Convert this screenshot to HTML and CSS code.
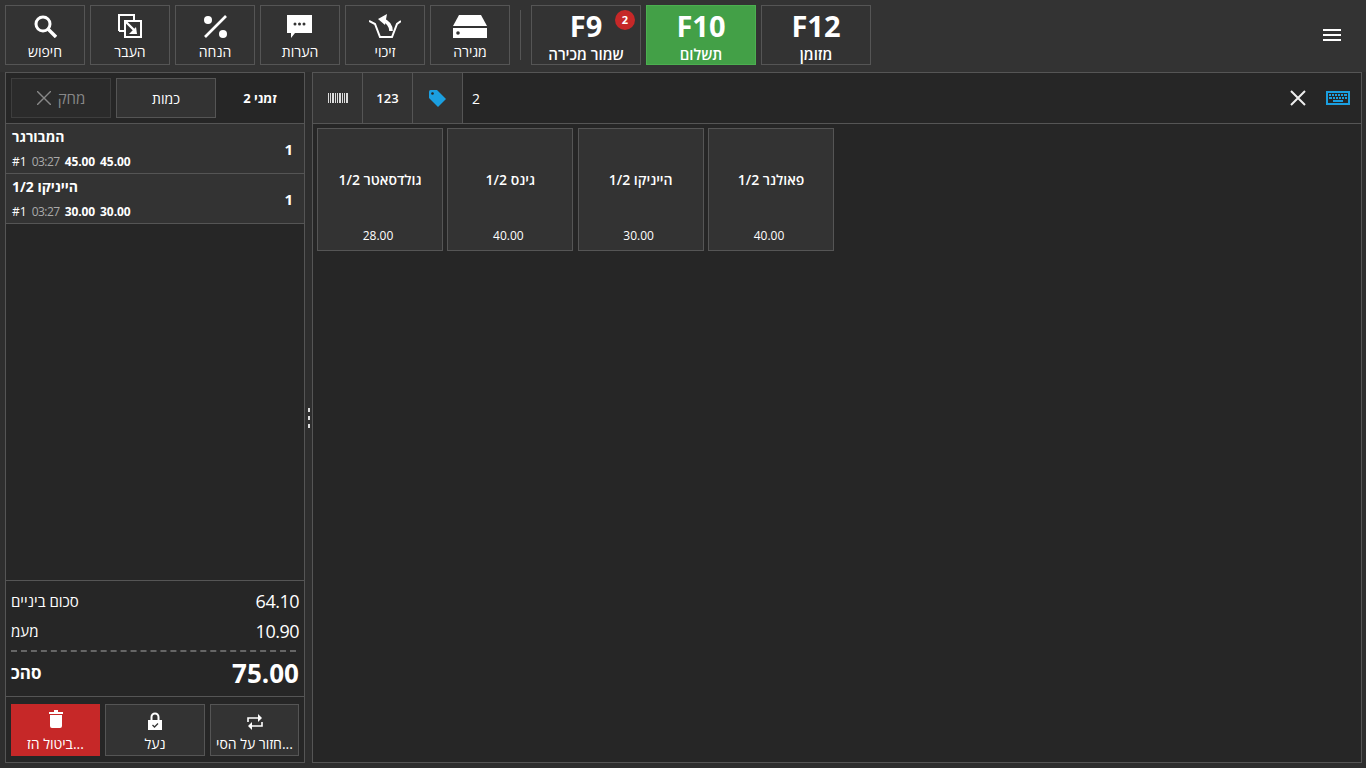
FILE: index.html
```html
<!DOCTYPE html>
<html lang="he">
<head>
<meta charset="utf-8">
<title>POS</title>
<link rel="stylesheet" href="styles.css">
</head>
<body>
<header class="topbar">
  <button class="tool"><svg class="ico" viewBox="0 0 24 24"><circle cx="10" cy="10" r="7" class="ln" stroke-width="3"/><path d="M15 15l8 8" class="ln" stroke-width="3.4"/></svg><span>חיפוש</span></button>
  <button class="tool"><svg class="ico" viewBox="0 0 24 24"><path d="M1 17V1h15v6" class="ln" stroke-width="2"/><path d="M1 17h6" class="ln" stroke-width="2"/><rect x="7" y="7" width="16" height="16" class="ln" stroke-width="2"/><path d="M7 7l10 10" class="ln" stroke-width="2.4"/><path d="M19 20h-8l7-7z" class="fl"/></svg><span>העבר</span></button>
  <button class="tool"><svg class="ico" viewBox="0 0 24 24"><circle cx="5" cy="6" r="4" class="fl"/><circle cx="20" cy="20" r="4" class="fl"/><path d="M23 2L2 23" class="ln" stroke-width="2.6"/></svg><span>הנחה</span></button>
  <button class="tool"><svg class="ico wide" viewBox="0 0 26 24"><path d="M0 1h25v18H8l-4 5v-5H0z" class="fl"/><circle cx="8" cy="10" r="1.5" class="dk"/><circle cx="12.500" cy="10" r="1.5" class="dk"/><circle cx="17" cy="10" r="1.500" class="dk"/></svg><span>הערות</span></button>
  <button class="tool"><svg class="ico xwide" viewBox="0 0 32 24"><path d="M0 7l6 3 5 13h12l5-13 4-3" class="ln" stroke-width="2"/><path d="M22 17c0-5-3-9-8-11" class="ln" stroke-width="3.6"/><path d="M18 0L9 5l7 6z" class="fl"/></svg><span>זיכוי</span></button>
  <button class="tool"><svg class="ico xxwide" viewBox="0 0 34 24"><path d="M6 1h22l6 11H0z" class="fl"/><path d="M0 14h34v10H0z" class="fl"/><circle cx="5" cy="19" r="1.800" class="dk"/></svg><span>מגירה</span></button>
  <div class="sep"></div>
  <button class="fkey"><b>F9</b><span>שמור מכירה</span><i class="badge">2</i></button>
  <button class="fkey pay"><b>F10</b><span>תשלום</span></button>
  <button class="fkey"><b>F12</b><span>מזומן</span></button>
  <svg class="menu" viewBox="0 0 18 12"><path d="M0 0h18v2H0zM0 5h18v2H0zM0 10h18v2H0z" class="fl"/></svg>
</header>
<main class="main">
  <section class="left">
    <div class="lhead">
      <button class="del"><svg class="delx" viewBox="0 0 14 14"><path d="M0 0l14 14M14 0L0 14" class="gl"/></svg><span>מחק</span></button>
      <button class="qty">כמות</button>
      <div class="oname">זמני 2</div>
    </div>
    <div class="rows">
      <div class="row">
        <div class="rinfo">
          <div class="rname">המבורגר</div>
          <div class="rmeta"><span>#1</span><span class="time">03:27</span><b>45.00</b><b>45.00</b></div>
        </div>
        <div class="rqty">1</div>
      </div>
      <div class="row">
        <div class="rinfo">
          <div class="rname">הייניקו 1/2</div>
          <div class="rmeta"><span>#1</span><span class="time">03:27</span><b>30.00</b><b>30.00</b></div>
        </div>
        <div class="rqty">1</div>
      </div>
    </div>
    <div class="totals">
      <div class="tline"><span>סכום ביניים</span><span class="tval">64.10</span></div>
      <div class="tline"><span>מעמ</span><span class="tval">10.90</span></div>
      <div class="dash"></div>
      <div class="tsum"><b>סהכ</b><b class="tbig">75.00</b></div>
    </div>
    <div class="actions">
      <button class="act red"><svg class="aico" viewBox="-1 0 16 22"><path d="M0 2h5V0h4v2h5v2H0zM1 5h12v11q0 2-2 2H3q-2 0-2-2z" class="fl"/></svg><span>ביטול הז...</span></button>
      <button class="act"><svg class="aico" viewBox="-1 -2 16 22"><path d="M3.500 8V5a3.500 3.500 0 0 1 7 0v3" class="ln" stroke-width="2"/><rect y="8" width="14" height="10" class="fl"/><path d="M4.500 13l2 2 3.500-3.500" class="dkl"/></svg><span>נעל</span></button>
      <button class="act"><svg class="aico" viewBox="0 -3 16 22"><path d="M1 9V5h12M15 9v4H3" class="ln" stroke-width="1.600"/><path d="M11 1l4 4-4 4zM5 9l-4 4 4 4z" class="fl"/></svg><span>חזור על הסי...</span></button>
    </div>
  </section>
  <div class="split"><i></i><i></i><i></i></div>
  <section class="right">
    <div class="rhead">
      <div class="tab"><svg class="bar" viewBox="0 0 20 10"><path d="M0 0h1v10H0zM2 0h1v10H2zM4 0h2v10H4zM7 0h1v10H7zM9 0h1v10H9zM11 0h2v10h-2zM14 0h1v10h-1zM16 0h1v10h-1zM18 0h2v10h-2z" class="bars"/></svg></div>
      <div class="tab num">123</div>
      <div class="tab"><svg class="tag" viewBox="0 0 17 17"><path d="M0 1.500Q0 0 1.500 0H8l9 9-8 8-9-9z" class="bl"/><circle cx="3.500" cy="3.500" r="1.300" class="tagh"/></svg></div>
      <div class="search">2</div>
      <svg class="clear" viewBox="0 0 16 16"><path d="M1 1l14 14M15 1L1 15" class="xl"/></svg>
      <svg class="kbd" viewBox="0 0 24 14"><path d="M0 0h24v14H0zM2 2v10h20V2z" class="bl"/><path d="M3 3h2v2H3zM6 3h2v2H6zM9 3h2v2H9zM12 3h2v2h-2zM15 3h2v2h-2zM18 3h3v2h-3zM3 6h3v2H3zM7 6h2v2H7zM10 6h2v2h-2zM13 6h2v2h-2zM16 6h2v2h-2zM19 6h2v2h-2zM7 9h10v2H7z" class="bl"/></svg>
    </div>
    <div class="grid">
      <button class="card"><span class="cname">גולדסאטר 1/2</span><span class="cprice">28.00</span></button>
      <button class="card"><span class="cname">גינס 1/2</span><span class="cprice">40.00</span></button>
      <button class="card"><span class="cname">הייניקו 1/2</span><span class="cprice">30.00</span></button>
      <button class="card"><span class="cname">פאולנר 1/2</span><span class="cprice">40.00</span></button>
    </div>
  </section>
</main>
</body>
</html>
```
FILE: styles.css
```css
* { box-sizing: border-box; }
html, body { margin: 0; height: 100%; }
body {
  width: 1366px;
  height: 768px;
  overflow: hidden;
  display: flex;
  flex-direction: column;
  background: #2e2e2e;
  color: #fff;
  font-family: "Open Sans", "Liberation Sans", sans-serif;
  font-size: 14px;
}
button {
  font: inherit;
  color: inherit;
  background: #333;
  border: 1px solid #555;
  padding: 0;
  margin: 0;
}
.ln { fill: none; stroke: #fff; }
.fl { fill: #fff; }
.bars { fill: #ddd; }
.dk { fill: #333; }
.dkl { fill: none; stroke: #333; stroke-width: 1.3; }
.gl { fill: none; stroke: #888; stroke-width: 1.4; }
.xl { fill: none; stroke: #eee; stroke-width: 2; }
.bl { fill: #1b9fe0; }
.tagh { fill: #262626; }

.topbar {
  height: 72px;
  flex: none;
  display: flex;
  align-items: flex-start;
  gap: 5px;
  padding: 5px 25px 0 5px;
  background: #333;
}
.tool {
  width: 80px;
  height: 60px;
  display: flex;
  flex-direction: column;
  align-items: center;
  padding-top: 8px;
  font-size: 14px;
  line-height: 19px;
}
.ico { width: 24px; height: 24px; flex: none; margin-bottom: 4px; }
.ico.wide { width: 26px; }
.ico.xwide { width: 32px; }
.ico.xxwide { width: 34px; }
.sep { width: 1px; height: 50px; margin: 5px 5px 0 5px; background: #555; }
.fkey {
  position: relative;
  width: 110px;
  height: 60px;
  display: flex;
  flex-direction: column;
  align-items: center;
  font-size: 15px;
  font-weight: 600;
  line-height: 16px;
}
.fkey b { font-size: 29px; font-weight: 700; line-height: 38px; margin-top: 1px; }
.fkey span { margin-top: 1px; }
.fkey.pay { background: #43a047; border-color: #4caf50; }
.badge {
  position: absolute;
  top: 4px;
  right: 5px;
  width: 20px;
  height: 20px;
  border-radius: 50%;
  background: #c62828;
  font-style: normal;
  font-size: 11px;
  font-weight: 700;
  line-height: 20px;
  text-align: center;
}
.menu { width: 18px; height: 12px; margin: 24px 0 0 auto; }

.main {
  flex: none;
  height: 691px;
  display: flex;
  padding-left: 5px;
}
.left {
  width: 300px;
  flex: none;
  display: flex;
  flex-direction: column;
  background: #262626;
  border: 1px solid #555;
}
.lhead {
  height: 51px;
  flex: none;
  display: flex;
  gap: 5px;
  padding: 5px 5px 0;
  border-bottom: 1px solid #555;
}
.del, .qty { width: 100px; height: 40px; flex: none; }
.del {
  display: flex;
  align-items: center;
  justify-content: center;
  gap: 7px;
  background: #2b2b2b;
  border-color: #3e3e3e;
  color: #888;
  font-size: 15px;
}
.delx { width: 14px; height: 14px; }
.oname { flex: 1; text-align: center; line-height: 40px; font-weight: 700; font-size: 13px; }
.rows { flex: 1; min-height: 0; }
.row {
  height: 50px;
  display: flex;
  align-items: center;
  justify-content: space-between;
  padding: 0 11px 0 6px;
  background: #333;
  border-bottom: 1px solid #555;
}
.rname { font-size: 14px; font-weight: 700; line-height: 18px; margin-bottom: 8px; }
.rmeta { display: flex; gap: 5px; font-size: 12px; line-height: 16px; }
.rmeta b { font-weight: 700; letter-spacing: -0.1px; }
.time { color: #aaa; letter-spacing: -0.5px; }
.rqty { font-size: 15px; font-weight: 700; }
.totals {
  height: 117px;
  flex: none;
  padding: 5px 5px 0;
  border-top: 1px solid #555;
  border-bottom: 1px solid #555;
}
.tline {
  height: 30px;
  display: flex;
  align-items: center;
  justify-content: space-between;
  font-size: 15px;
}
.tval { font-size: 18px; letter-spacing: -0.5px; }
.dash { height: 0; margin: 4px 3px 0 0; border-top: 2px dashed #666; }
.tsum {
  display: flex;
  align-items: center;
  justify-content: space-between;
  height: 41px;
  font-size: 17px;
}
.tbig { font-size: 26px; }
.actions {
  height: 65px;
  flex: none;
  display: grid;
  grid-template-columns: 89px 1fr 89px;
  gap: 5px;
  padding: 7px 5px;
}
.act {
  display: flex;
  flex-direction: column;
  align-items: center;
  height: 52px;
  padding-top: 5px;
  font-size: 14px;
  line-height: 18px;
  white-space: nowrap;
}
.aico { height: 22px; width: 16px; flex: none; margin-bottom: 3px; }
.red { background: #c62828; border-color: #c62828; }

.split {
  width: 7px;
  flex: none;
  display: flex;
  flex-direction: column;
  align-items: center;
  justify-content: center;
  gap: 4px;
}
.split i { width: 2px; height: 4px; background: #ddd; }

.right {
  width: 1050px;
  flex: none;
  display: flex;
  flex-direction: column;
  background: #262626;
  border: 1px solid #555;
}
.rhead {
  height: 51px;
  flex: none;
  display: flex;
  align-items: center;
  border-bottom: 1px solid #555;
  padding-right: 11px;
}
.tab {
  width: 50px;
  height: 50px;
  flex: none;
  display: flex;
  align-items: center;
  justify-content: center;
  background: #333;
  border-right: 1px solid #555;
  font-weight: 600;
  font-size: 13px;
}
.bar { width: 20px; height: 10px; }
.tag { width: 17px; height: 17px; }
.search { flex: 1; padding-left: 9px; font-size: 14px; }
.clear { width: 16px; height: 16px; margin-right: 20px; }
.kbd { width: 24px; height: 14px; }
.grid {
  display: flex;
  gap: 4.33px;
  padding: 4px;
}
.card {
  width: 126px;
  height: 123px;
  position: relative;
  display: flex;
  flex-direction: column;
  align-items: center;
  font-size: 14px;
}
.cname { margin-top: 42px; line-height: 18px; font-weight: 600; }
.cprice { margin-top: auto; margin-bottom: 6px; padding-right: 4px; font-size: 12px; line-height: 16px; font-weight: 500; }
```
